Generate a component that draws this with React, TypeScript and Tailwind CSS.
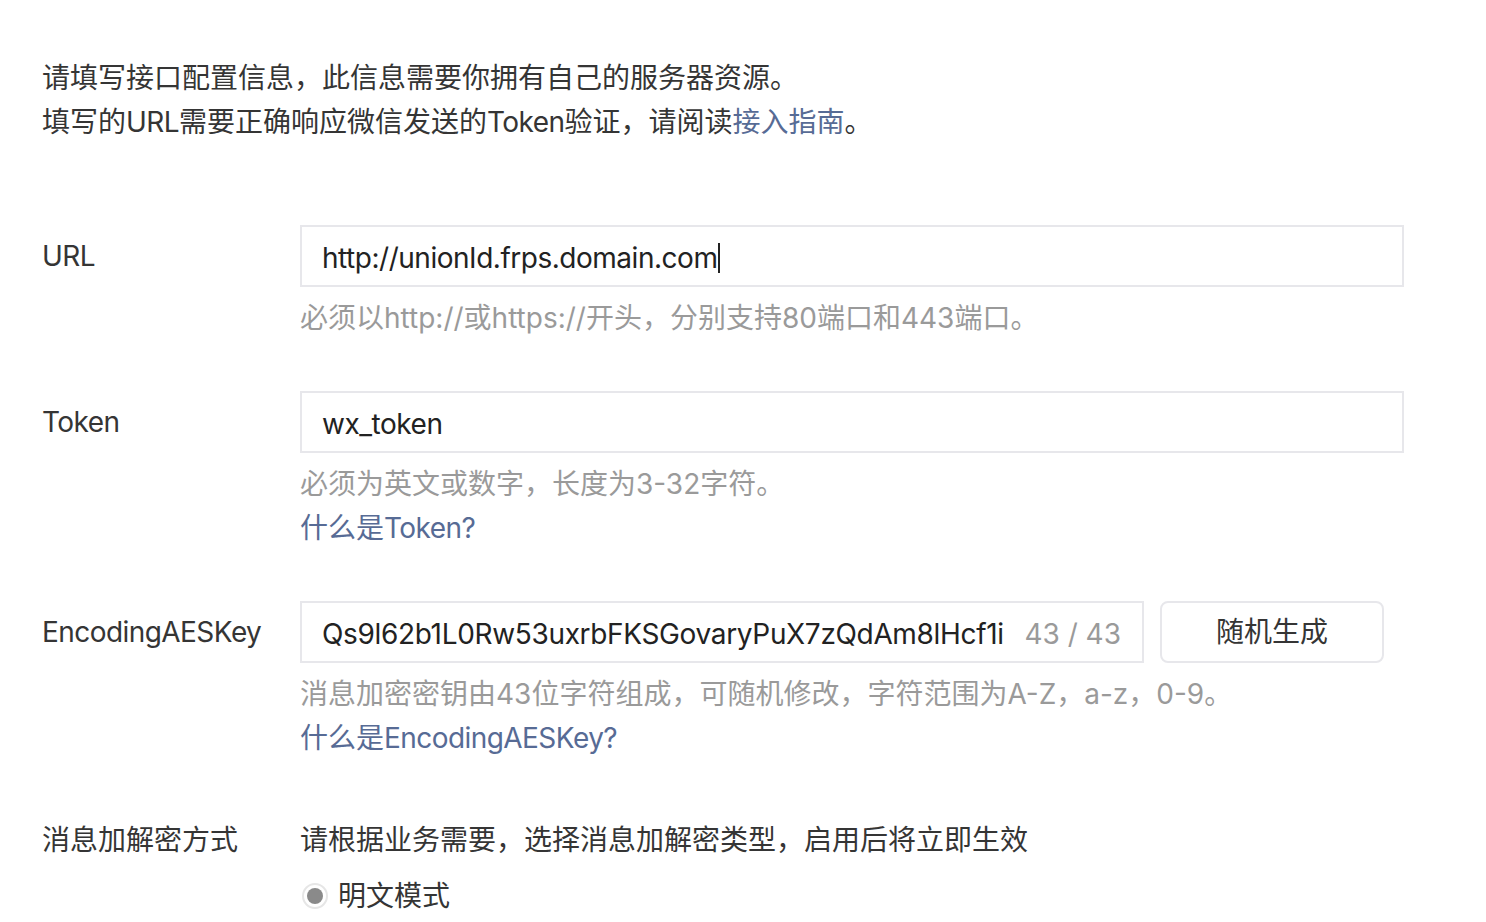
import React from "react";

const font = { fontFamily: 'Inter, "Noto Sans CJK SC", sans-serif' };

function L({ children, t = "tracking-[-0.02em]" }: { children: React.ReactNode; t?: string }) {
  return <span className={t}>{children}</span>;
}

function Label({ children }: { children: React.ReactNode }) {
  return <div className="w-[258px] shrink-0 leading-[62px] text-[#353535] tracking-[-0.02em]">{children}</div>;
}

export default function App() {
  return (
    <div className="min-h-screen bg-white pl-[42px] pt-[56px] text-[28px] text-[#353535]" style={font}>
      <div className="leading-[44px]">
        <p>请填写接口配置信息，此信息需要你拥有自己的服务器资源。</p>
        <p>
          填写的<L>URL</L>需要正确响应微信发送的<L>Token</L>验证，请阅读<span className="text-[#576b95]">接入指南</span>。
        </p>
      </div>

      {/* URL */}
      <div className="mt-[81px] flex">
        <Label>URL</Label>
        <div>
          <div className="flex h-[62px] w-[1104px] items-center border-2 border-[#e7e7eb] px-[20px] pt-[4px]">
            <span className="text-[#222] tracking-[-0.017em]">http://unionId.frps.domain.com</span>
            <span className="ml-[1px] inline-block h-[30px] w-[2px] bg-[#222]" />
          </div>
          <p className="mt-[9px] leading-[44px] text-[#9a9a9a]">必须以http://或https://开头，分别支持80端口和443端口。</p>
        </div>
      </div>

      {/* Token */}
      <div className="mt-[51px] flex">
        <Label>Token</Label>
        <div>
          <div className="flex h-[62px] w-[1104px] items-center border-2 border-[#e7e7eb] px-[20px] pt-[4px]">
            <span className="text-[#222] tracking-[-0.017em]">wx_token</span>
          </div>
          <p className="mt-[9px] leading-[44px] text-[#9a9a9a]">必须为英文或数字，长度为3-32字符。</p>
          <p className="leading-[44px] text-[#576b95]">
            什么是<L>Token?</L>
          </p>
        </div>
      </div>

      {/* EncodingAESKey */}
      <div className="mt-[51px] flex">
        <Label>EncodingAESKey</Label>
        <div>
          <div className="flex items-center">
            <div className="flex h-[62px] w-[844px] items-center justify-between border-2 border-[#e7e7eb] pl-[20px] pr-[21px] pt-[4px]">
              <span className="text-[#222] tracking-[-0.012em]">Qs9l62b1L0Rw53uxrbFKSGovaryPuX7zQdAm8lHcf1i</span>
              <span className="text-[#9a9a9a]">43 / 43</span>
            </div>
            <button className="ml-[16px] h-[62px] w-[224px] rounded-[8px] border-2 border-[#e7e7eb] bg-white text-[#353535]">
              随机生成
            </button>
          </div>
          <p className="mt-[9px] leading-[44px] text-[#9a9a9a]">消息加密密钥由43位字符组成，可随机修改，字符范围为A-Z，a-z，0-9。</p>
          <p className="leading-[44px] text-[#576b95]">
            什么是<L>EncodingAESKey?</L>
          </p>
        </div>
      </div>

      {/* 消息加解密方式 */}
      <div className="mt-[58px] flex">
        <div className="w-[258px] shrink-0 leading-[44px]">消息加解密方式</div>
        <div>
          <p className="leading-[44px]">请根据业务需要，选择消息加解密类型，启用后将立即生效</p>
          <div className="mt-[11px] flex h-[44px] items-center pt-[2px]">
            <span className="ml-[2px] flex h-[26px] w-[26px] items-center justify-center rounded-full border-2 border-[#e6e6e6]">
              <span className="h-[16px] w-[16px] rounded-full bg-[#8a8a8a]" />
            </span>
            <span className="ml-[10px]">明文模式</span>
          </div>
        </div>
      </div>
    </div>
  );
}
